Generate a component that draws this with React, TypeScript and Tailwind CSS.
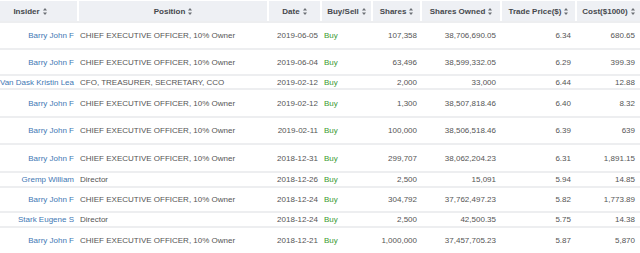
import React from 'react'

interface Trade {
  insider: string
  position: string
  date: string
  type: string
  shares: string
  owned: string
  price: string
  cost: string
  h: string
}

const trades: Trade[] = [
  { insider: 'Barry John F', position: 'CHIEF EXECUTIVE OFFICER, 10% Owner', date: '2019-06-05', type: 'Buy', shares: '107,358', owned: '38,706,690.05', price: '6.34', cost: '680.65', h: 'h-[27px]' },
  { insider: 'Barry John F', position: 'CHIEF EXECUTIVE OFFICER, 10% Owner', date: '2019-06-04', type: 'Buy', shares: '63,496', owned: '38,599,332.05', price: '6.29', cost: '399.39', h: 'h-[26px]' },
  { insider: 'Van Dask Kristin Lea', position: 'CFO, TREASURER, SECRETARY, CCO', date: '2019-02-12', type: 'Buy', shares: '2,000', owned: '33,000', price: '6.44', cost: '12.88', h: 'h-[14px]' },
  { insider: 'Barry John F', position: 'CHIEF EXECUTIVE OFFICER, 10% Owner', date: '2019-02-12', type: 'Buy', shares: '1,300', owned: '38,507,818.46', price: '6.40', cost: '8.32', h: 'h-[28px]' },
  { insider: 'Barry John F', position: 'CHIEF EXECUTIVE OFFICER, 10% Owner', date: '2019-02-11', type: 'Buy', shares: '100,000', owned: '38,506,518.46', price: '6.39', cost: '639', h: 'h-[27px]' },
  { insider: 'Barry John F', position: 'CHIEF EXECUTIVE OFFICER, 10% Owner', date: '2018-12-31', type: 'Buy', shares: '299,707', owned: '38,062,204.23', price: '6.31', cost: '1,891.15', h: 'h-[28px]' },
  { insider: 'Gremp William', position: 'Director', date: '2018-12-26', type: 'Buy', shares: '2,500', owned: '15,091', price: '5.94', cost: '14.85', h: 'h-[15px]' },
  { insider: 'Barry John F', position: 'CHIEF EXECUTIVE OFFICER, 10% Owner', date: '2018-12-24', type: 'Buy', shares: '304,792', owned: '37,762,497.23', price: '5.82', cost: '1,773.89', h: 'h-[25px]' },
  { insider: 'Stark Eugene S', position: 'Director', date: '2018-12-24', type: 'Buy', shares: '2,500', owned: '42,500.35', price: '5.75', cost: '14.38', h: 'h-[15px]' },
  { insider: 'Barry John F', position: 'CHIEF EXECUTIVE OFFICER, 10% Owner', date: '2018-12-21', type: 'Buy', shares: '1,000,000', owned: '37,457,705.23', price: '5.87', cost: '5,870', h: 'h-[27px]' },
]

const cols = 'grid grid-cols-[77px_190px_53px_51px_49px_80px_75px_65px]'

function SortIcon() {
  return (
    <svg width="4" height="7" viewBox="0 0 4 7" className="ml-[3px] shrink-0">
      <path d="M2 0 L4 2.6 L0 2.6 Z" fill="#6b6f75" />
      <path d="M2 7 L4 4.4 L0 4.4 Z" fill="#6b6f75" />
    </svg>
  )
}

function Th({ label, first, extra }: { label: string; first?: boolean; extra?: string }) {
  return (
    <div className={`flex items-center justify-center bg-[#eef0f4] ${first ? '' : 'border-l-2 border-white'} ${extra ?? ''}`}>
      <span>{label}</span>
      <SortIcon />
    </div>
  )
}

export default function App() {
  return (
    <div className="w-[640px] h-[253px] overflow-hidden bg-white font-['Liberation_Sans',Arial,sans-serif] text-[8px] leading-[9px] text-[#555]">
      {/* Header */}
      <div className={`${cols} h-[21px] pt-[1px] font-bold text-[#45484d]`}>
        <Th label="Insider" first extra="pr-[17px]" />
        <Th label="Position" />
        <Th label="Date" />
        <Th label="Buy/Sell" />
        <Th label="Shares" />
        <Th label="Shares Owned" />
        <Th label="Trade Price($)" />
        <Th label="Cost($1000)" />
      </div>

      {/* Rows */}
      {trades.map((t, i) => (
        <div key={i} className={`${cols} ${t.h} border-t-2 border-[#edeef0] whitespace-nowrap`}>
          <div className="flex items-center justify-end pr-[3px] text-[#3f78b4]">{t.insider}</div>
          <div className="flex items-center pl-[3px]">{t.position}</div>
          <div className="flex items-center justify-end pr-[2px]">{t.date}</div>
          <div className="flex items-center pl-[4px] text-[#3a9a2f]">{t.type}</div>
          <div className="flex items-center justify-end pr-[3px]">{t.shares}</div>
          <div className="flex items-center justify-end pr-[4px]">{t.owned}</div>
          <div className="flex items-center justify-end pr-[4px]">{t.price}</div>
          <div className="flex items-center justify-end pr-[5px]">{t.cost}</div>
        </div>
      ))}
    </div>
  )
}
